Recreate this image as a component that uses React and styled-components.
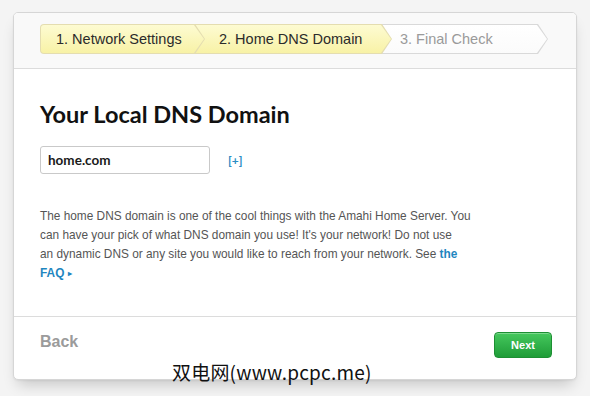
import React from 'react';
import styled, { createGlobalStyle } from 'styled-components';

const GlobalStyle = createGlobalStyle`
  html, body {
    margin: 0;
    padding: 0;
    background: #f4f4f4;
  }
  body {
    font-family: "Liberation Sans", Arial, sans-serif;
  }
`;

const steps = [
  { label: '1. Network Settings', width: 165, pad: 16, done: true },
  { label: '2. Home DNS Domain', width: 197, pad: 24, done: true },
  { label: '3. Final Check', width: 166, pad: 18, done: false },
];

export default function App() {
  return (
    <Page>
      <GlobalStyle />
      <Card>
        <Header>
          <StepsBar>
            {steps.map((s, i) => (
              <Step key={s.label} $w={s.width} $pad={s.pad} $done={s.done} $first={i === 0} $z={10 - i}>
                <StepLabel $done={s.done}>{s.label}</StepLabel>
              </Step>
            ))}
          </StepsBar>
        </Header>

        <Body>
          <Title>Your Local DNS Domain</Title>
          <FieldRow>
            <DomainInput type="text" defaultValue="home.com" />
            <AddLink href="#">[+]</AddLink>
          </FieldRow>
          <Description>
            The home DNS domain is one of the cool things with the Amahi Home Server. You
            <br />
            can have your pick of what DNS domain you use! It's your network! Do not use
            <br />
            an dynamic DNS or any site you would like to reach from your network. See{' '}
            <FaqLink href="#">the<br />FAQ&nbsp;<Caret>▸</Caret></FaqLink>
          </Description>
        </Body>

        <Footer>
          <BackLink>Back</BackLink>
          <NextButton>Next</NextButton>
        </Footer>
      </Card>
      <Watermark>双电网(www.pcpc.me)</Watermark>
    </Page>
  );
}

const Page = styled.div`
  position: relative;
  width: 590px;
  height: 396px;
  padding: 12px 13px 0;
  box-sizing: border-box;
`;

const Card = styled.div`
  width: 564px;
  height: 368px;
  box-sizing: border-box;
  background: #fff;
  border: 1px solid #d6d6d6;
  border-radius: 5px;
  box-shadow: 0 9px 14px -5px rgba(0, 0, 0, 0.2), 0 1px 2px rgba(0, 0, 0, 0.05);
  display: flex;
  flex-direction: column;
  overflow: hidden;
`;

const Header = styled.div`
  height: 56px;
  box-sizing: border-box;
  background: #f9f9f9;
  border-bottom: 1px solid #dcdcdc;
  padding: 11px 0 0 26px;
`;

const StepsBar = styled.div`
  display: flex;
  height: 30px;
`;

const Step = styled.div`
  position: relative;
  flex: none;
  width: ${(p) => p.$w}px;
  height: 30px;
  margin-left: ${(p) => (p.$first ? 0 : -10)}px;
  z-index: ${(p) => p.$z};
  display: flex;
  align-items: center;
  padding-left: ${(p) => p.$pad}px;
  box-sizing: border-box;
  background: ${(p) => (p.$done ? '#e4ddb0' : '#d9d9d9')};
  border-radius: ${(p) => (p.$first ? '4px 0 0 4px' : '0')};
  clip-path: polygon(0 0, calc(100% - 10px) 0, 100% 50%, calc(100% - 10px) 100%, 0 100%);

  &::before {
    content: '';
    position: absolute;
    inset: 1px 1px 1px ${(p) => (p.$first ? 1 : 0)}px;
    border-radius: ${(p) => (p.$first ? '3px 0 0 3px' : '0')};
    background: ${(p) =>
      p.$done ? 'linear-gradient(#fdfbd2, #f8f2a6)' : 'linear-gradient(#ffffff, #fbfbfb)'};
    clip-path: polygon(0 0, calc(100% - 10px) 0, 100% 50%, calc(100% - 10px) 100%, 0 100%);
  }
`;

const StepLabel = styled.span`
  position: relative;
  font-size: 14.5px;
  color: ${(p) => (p.$done ? '#2b2b2b' : '#9a9a9a')};
`;

const Body = styled.div`
  flex: 1;
  padding: 31px 0 0 26px;
  border-bottom: 1px solid #dcdcdc;
`;

const Title = styled.h1`
  margin: 0;
  font-family: Lato, "Liberation Sans", sans-serif;
  font-weight: 700;
  font-size: 23.5px;
  line-height: 28px;
  color: #111;
`;

const FieldRow = styled.div`
  display: flex;
  align-items: center;
  gap: 18px;
  margin-top: 18px;
`;

const DomainInput = styled.input`
  width: 170px;
  height: 28px;
  box-sizing: border-box;
  border: 1px solid #c9c9c9;
  border-radius: 3px;
  padding: 0 7px;
  font-family: Lato, "Liberation Sans", sans-serif;
  font-weight: 700;
  font-size: 13.5px;
  color: #1a1a1a;
  outline: none;
`;

const AddLink = styled.a`
  font-family: Lato, "Liberation Sans", sans-serif;
  font-weight: 700;
  font-size: 12px;
  color: #2a8cc4;
  text-decoration: none;
`;

const Description = styled.p`
  margin: 33px 0 0;
  width: 460px;
  font-size: 11.85px;
  line-height: 19px;
  color: #555;
`;

const FaqLink = styled.a`
  font-weight: 700;
  color: #1f86c0;
  text-decoration: none;
`;

const Caret = styled.span`
  font-size: 8px;
  vertical-align: 1px;
`;

const Footer = styled.div`
  height: 62px;
  display: flex;
  align-items: center;
  justify-content: space-between;
  padding: 0 24px 0 26px;
  box-sizing: border-box;
`;

const BackLink = styled.span`
  font-size: 16px;
  font-weight: 700;
  color: #9b9b9b;
  margin-top: -13px;
`;

const NextButton = styled.button`
  width: 58px;
  height: 26px;
  margin-top: -6px;
  border: 1px solid #1d8f33;
  border-radius: 4px;
  background: linear-gradient(#45c85d, #1f9c38);
  color: #fff;
  font-family: "Liberation Sans", Arial, sans-serif;
  font-weight: 700;
  font-size: 11px;
  box-shadow: inset 0 1px 0 rgba(255, 255, 255, 0.3);
`;

const Watermark = styled.div`
  position: absolute;
  left: 172px;
  top: 360px;
  font-family: "Noto Sans CJK SC", sans-serif;
  font-size: 19px;
  line-height: 24px;
  color: #111;
  letter-spacing: 0.2px;
`;
